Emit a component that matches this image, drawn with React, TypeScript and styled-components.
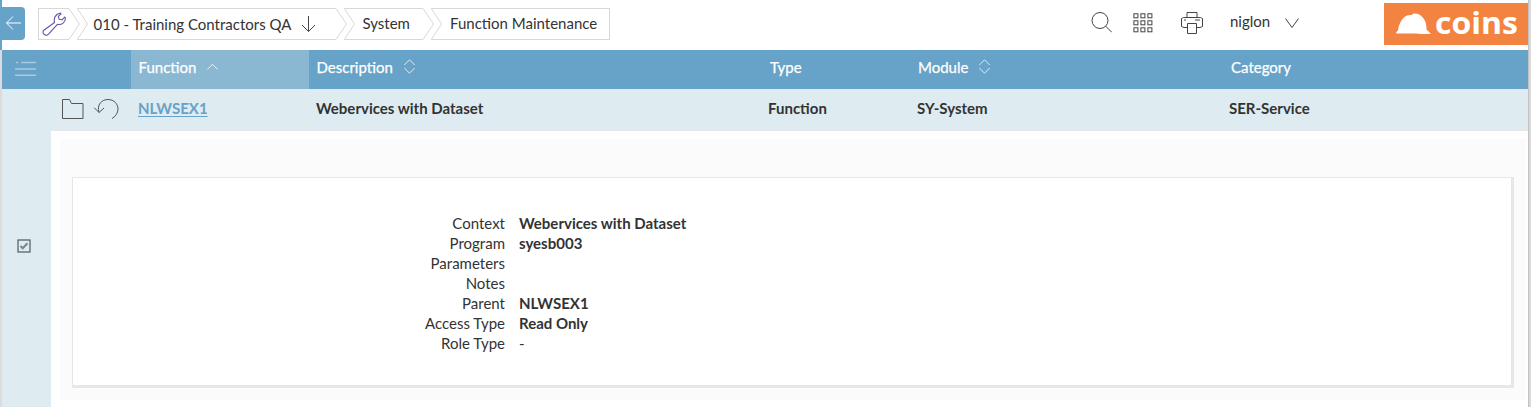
import React from "react";
import styled, { createGlobalStyle } from "styled-components";

const Global = createGlobalStyle`
  * { box-sizing: border-box; }
  html, body { margin: 0; padding: 0; background: #fff; overflow: hidden; }
  body { font-family: Lato, "Liberation Sans", sans-serif; font-size: 15px; color: #333; }
  svg { display: block; flex: none; }
`;

const Frame = styled.div`
  display: grid;
  grid-template-columns: 2px 1526px 3px;
  height: 407px;
`;
const LeftEdge = styled.div`
  background: linear-gradient(#67a2c8 50px, #dcdcdc 50px);
`;
const RightEdge = styled.div`
  background: linear-gradient(90deg, #bdbdbd, #dedede 70%);
`;
const Page = styled.div`
  display: flex;
  flex-direction: column;
  min-width: 0;
`;

const TopBar = styled.header`
  display: flex;
  height: 50px;
  flex: none;
`;
const BackButton = styled.button`
  width: 23px;
  height: 33px;
  margin: 7px 13px 0 0;
  padding: 0 0 2px 3px;
  border: 0;
  border-radius: 0 4px 4px 0;
  background: #67a2c8;
  display: flex;
  align-items: center;
`;
const Crumbs = styled.nav`
  display: flex;
  height: 32px;
  margin-top: 8px;
`;
const Crumb = styled.div<{ $width: number; $first?: boolean; $last?: boolean; $pad?: number }>`
  display: flex;
  align-items: center;
  width: ${(p) => p.$width}px;
  padding-left: ${(p) => p.$pad ?? 0}px;
  border: 1px solid #d8d8d8;
  border-width: 1px ${(p) => (p.$last ? 1 : 0)}px 1px ${(p) => (p.$first ? 1 : 0)}px;
  white-space: nowrap;
  line-height: 30px;
`;
const CrumbText = styled.span<{ $drop?: number }>`
  padding-bottom: ${(p) => (p.$drop ? 0 : 2)}px;
  line-height: 28px;
`;
const DropArrow = styled.svg`
  margin-left: 10px;
`;
const Tools = styled.div`
  display: flex;
  align-items: flex-start;
  margin-left: auto;
`;
const Tool = styled.div<{ $top: number; $right: number }>`
  margin: ${(p) => p.$top}px ${(p) => p.$right}px 0 0;
`;
const UserName = styled.div`
  width: 55px;
  margin-top: 11px;
  line-height: 20px;
`;
const Logo = styled.div`
  display: flex;
  width: 144px;
  height: 42px;
  margin-top: 3px;
  background: #f38341;
`;

const columns = "49px 80px 178px 452px 149px 312px 1fr";

const HeaderRow = styled.div`
  display: grid;
  grid-template-columns: ${columns};
  height: 39px;
  flex: none;
  background: #67a2c8;
  color: #fff;
`;
const HeaderCell = styled.div<{ $active?: boolean; $pad?: number }>`
  display: flex;
  align-items: center;
  gap: 11px;
  padding: 0 0 5px ${(p) => p.$pad ?? 8}px;
  background: ${(p) => (p.$active ? "#8ab7d2" : "transparent")};
  -webkit-text-stroke: 0.25px #fff;
`;
const MenuCell = styled.div`
  padding: 11px 0 0 13px;
`;
const DataRow = styled.div`
  display: grid;
  grid-template-columns: ${columns};
  height: 41px;
  flex: none;
  background: #deebf1;
  font-weight: 700;
`;
const Cell = styled.div`
  display: flex;
  align-items: center;
  padding: 0 0 3px 7px;
  white-space: nowrap;
`;
const RowIcons = styled(Cell)`
  padding: 0 0 1px 11px;
  gap: 10px;
`;
const FunctionLink = styled.a`
  color: #67a2c8;
  text-decoration: underline;
  text-decoration-thickness: 1px;
  text-underline-offset: 2px;
`;

const Body = styled.div`
  display: flex;
  flex: 1;
`;
const SelectColumn = styled.div`
  width: 49px;
  padding: 109px 0 0 15px;
  background: #deebf1;
`;
const Detail = styled.div`
  flex: 1;
  padding: 8px 2px 0 9px;
  border-top: 1px solid #e8e8e8;
`;
const DetailPanel = styled.div`
  height: 261px;
  padding: 38px 12px 0 12px;
  background: #fbfbfb;
`;
const Card = styled.div`
  height: 211px;
  padding-top: 35px;
  border: 1px solid #e7e7e7;
  border-right-width: 3px;
  border-bottom-width: 3px;
  background: #fff;
`;
const Field = styled.div`
  display: grid;
  grid-template-columns: 432px 1fr;
  column-gap: 14px;
  height: 20px;
  line-height: 20px;
`;
const Label = styled.div`
  text-align: right;
`;
const Value = styled.div<{ $plain?: boolean }>`
  font-weight: ${(p) => (p.$plain ? 400 : 700)};
`;
const LogoArt = styled.svg`
  overflow: visible;
`;

const fields = [
  ["Context", "Webervices with Dataset"],
  ["Program", "syesb003"],
  ["Parameters", ""],
  ["Notes", ""],
  ["Parent", "NLWSEX1"],
  ["Access Type", "Read Only"],
  ["Role Type", "-"],
];

const Separator = () => (
  <svg width="19" height="32" fill="none" stroke="#d8d8d8">
    <path d="M0 .5L10.5 16L0 31.5M19 .5H8.3L18.5 16L8.3 31.5H19" />
  </svg>
);

const SortIcon = () => (
  <svg width="12" height="16" fill="none" stroke="#fff" strokeWidth=".8">
    <path d="M.3 6L5.5 .8L10.7 6M.3 9L5.5 14.2L10.7 9" />
  </svg>
);

export default function App() {
  return (
    <>
      <Global />
      <Frame>
        <LeftEdge />
        <Page>
          <TopBar>
            <BackButton aria-label="Back">
              <svg width="17" height="16" fill="none" stroke="#fff">
                <path d="M16 8H1.5M8 1.5L1.5 8L8 14.5" />
              </svg>
            </BackButton>
            <Crumbs>
              <Crumb $width={31} $first $pad={3}>
                <svg width="24" height="24" viewBox="0 0 24 24" fill="none" stroke="#6a4fa8" strokeWidth="1.1" strokeLinejoin="round">
                  <path d="M1.5 18.5L12.5 10.5C11.6 6.5 13 2 18.5 1L19 1.8L16.3 4.3L17.2 7.3L20.1 7.8L22.6 5L23.3 5.6C23.8 10.4 19.6 13.2 15.4 12.3L6.5 22.1C4.5 24.2 1.8 22.9 1.3 21.4C.9 20.2 1 19.2 1.5 18.5Z" />
                </svg>
              </Crumb>
              <Separator />
              <Crumb $width={248} $pad={5.5}>
                <CrumbText $drop={1}>010 - Training Contractors QA</CrumbText>
                <DropArrow width="15" height="17" fill="none" stroke="#444">
                  <path d="M7.5 0V15.5M1 9L7.5 15.5L14 9" />
                </DropArrow>
              </Crumb>
              <Separator />
              <Crumb $width={68} $pad={7.5}>
                <CrumbText>System</CrumbText>
              </Crumb>
              <Separator />
              <Crumb $width={168} $last $pad={8}>
                <CrumbText>Function Maintenance</CrumbText>
              </Crumb>
            </Crumbs>
            <Tools>
              <Tool $top={12} $right={21}>
                <svg width="21" height="21" fill="none" stroke="#444">
                  <circle cx="9" cy="8.5" r="8" />
                  <path d="M14.7 14.2L20.8 20.3" />
                </svg>
              </Tool>
              <Tool $top={13} $right={28}>
                <svg width="20" height="20" fill="none" stroke="#444">
                  {[0, 7, 14].map((y) =>
                    [0, 7, 14].map((x) => <rect key={`${x}-${y}`} x={x + 0.9} y={y + 0.8} width="4" height="4" />)
                  )}
                </svg>
              </Tool>
              <Tool $top={12} $right={27}>
                <svg width="22" height="22" fill="none" stroke="#444">
                  <path d="M6 5.5V.5H16V5.5M6 15.5H3L.5 14.5V6.5L2.5 5.5H19.5L21.5 6.5V14.5L19 15.5H16M3 8H5M14 8H19" />
                  <path d="M6.5 11.5H15.5V21.5H6.5Z" />
                </svg>
              </Tool>
              <UserName>niglon</UserName>
              <Tool $top={18} $right={85}>
                <svg width="14" height="11" fill="none" stroke="#444">
                  <path d="M.5 .5L7 9.5L13.5 .5" />
                </svg>
              </Tool>
              <Logo>
                <LogoArt width="144" height="42">
                  <path fill="#fff" d="M12.3 29L14 27.5C15 19 20 11 27.5 12L29.5 10.5C38 10 43 18 42.5 26.5L47 30.7C37 31.5 33 30 12.3 30.5Z" />
                  <text x="51" y="31" textLength="83" lengthAdjust="spacingAndGlyphs" fill="#fff" fontFamily="Open Sans" fontSize="31" fontWeight="700">coins</text>
                </LogoArt>
              </Logo>
            </Tools>
          </TopBar>
          <HeaderRow>
            <MenuCell>
              <svg width="21" height="16" stroke="#a9cbe0" strokeWidth="1.4">
                <path d="M1 1.5H3M6 1.5H21M0 8H21M0 14.3H21" />
              </svg>
            </MenuCell>
            <HeaderCell />
            <HeaderCell $active $pad={7.5}>
              Function
              <svg width="12" height="8" fill="none" stroke="#fff" strokeWidth=".8">
                <path d="M.3 6.5L5.5 1.3L10.7 6.5" />
              </svg>
            </HeaderCell>
            <HeaderCell $pad={7.5}>
              Description
              <SortIcon />
            </HeaderCell>
            <HeaderCell $pad={9}>Type</HeaderCell>
            <HeaderCell>
              Module
              <SortIcon />
            </HeaderCell>
            <HeaderCell $pad={9}>Category</HeaderCell>
          </HeaderRow>
          <DataRow>
            <Cell />
            <RowIcons>
              <svg width="22" height="20" fill="none" stroke="#555">
                <path d="M.5 19.5V.5H7.5L9.5 4.5H21V19.5Z" />
              </svg>
              <svg width="26" height="20" fill="none" stroke="#555">
                <path d="M5 13.5C2.5 5.5 8 .5 14 .5C20 .5 24 5 24 10C24 14 21.5 17.5 18 19.5M0 8.5L5 13.5L10 9" />
              </svg>
            </RowIcons>
            <Cell><FunctionLink>NLWSEX1</FunctionLink></Cell>
            <Cell>Webervices with Dataset</Cell>
            <Cell>Function</Cell>
            <Cell>SY-System</Cell>
            <Cell>SER-Service</Cell>
          </DataRow>
          <Body>
            <SelectColumn>
              <svg width="14" height="14" fill="none" stroke="#4d5a60">
                <rect x="1" y="1" width="12" height="12" strokeWidth="1.2" />
                <path d="M3.5 7L5.7 9.3L10.5 4.3" stroke="#7b868b" strokeWidth="2" />
              </svg>
            </SelectColumn>
            <Detail>
              <DetailPanel>
                <Card>
                  {fields.map(([label, value]) => (
                    <Field key={label}>
                      <Label>{label}</Label>
                      <Value $plain={value === "-"}>{value}</Value>
                    </Field>
                  ))}
                </Card>
              </DetailPanel>
            </Detail>
          </Body>
        </Page>
        <RightEdge />
      </Frame>
    </>
  );
}
